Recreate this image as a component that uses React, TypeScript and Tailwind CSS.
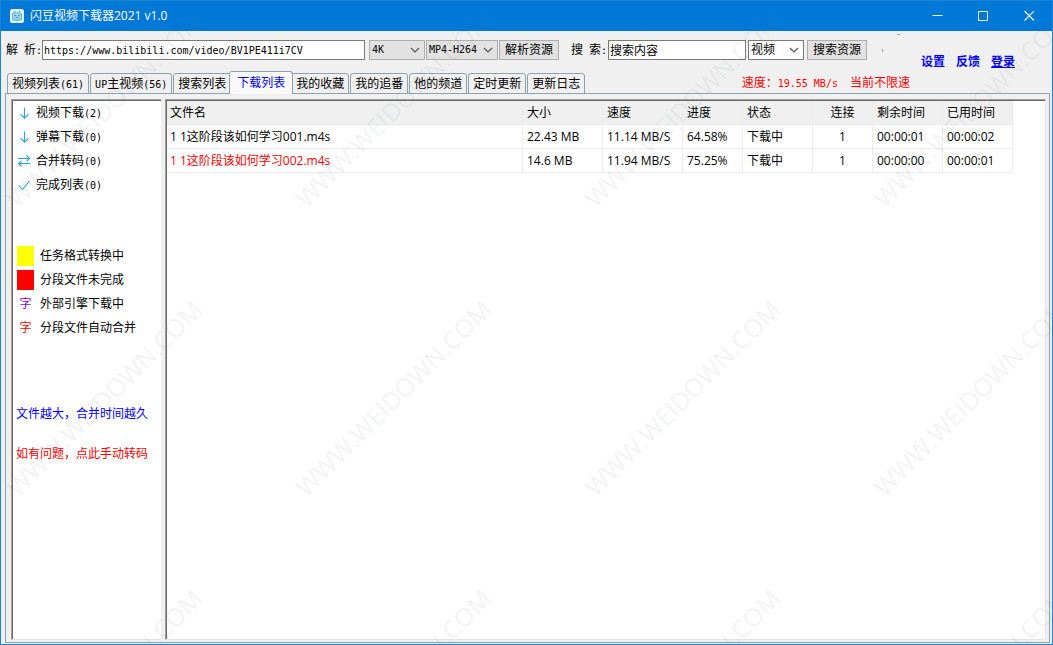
import { useState } from 'react'
import type { ReactNode } from 'react'

const uiFont = "font-['Open_Sans','Noto_Sans_CJK_SC',sans-serif]"
const monoFont = "font-['DejaVu_Sans_Mono','Noto_Sans_CJK_SC',monospace]"

const tabs = [
  { label: '视频列表', count: '(61)' },
  { prefix: 'UP', label: '主视频', count: '(56)' },
  { label: '搜索列表' },
  { label: '下载列表' },
  { label: '我的收藏' },
  { label: '我的追番' },
  { label: '他的频道' },
  { label: '定时更新' },
  { label: '更新日志' },
]

const queues = [
  { icon: 'down', label: '视频下载', count: 2 },
  { icon: 'down', label: '弹幕下载', count: 0 },
  { icon: 'swap', label: '合并转码', count: 0 },
  { icon: 'check', label: '完成列表', count: 0 },
]

const columns = [
  { title: '文件名', col: 'w-[356px]' },
  { title: '大小', col: 'w-20' },
  { title: '速度', col: 'w-20' },
  { title: '进度', col: 'w-[60px]' },
  { title: '状态', col: 'w-[70px]' },
  { title: '连接', col: 'w-[60px]', center: true },
  { title: '剩余时间', col: 'w-[70px]' },
  { title: '已用时间', col: 'w-[70px]' },
]

const rows = [
  { failed: false, cells: ['1 1这阶段该如何学习001.m4s', '22.43 MB', '11.14 MB/S', '64.58%', '下载中', '1', '00:00:01', '00:00:02'] },
  { failed: true, cells: ['1 1这阶段该如何学习002.m4s', '14.6 MB', '11.94 MB/S', '75.25%', '下载中', '1', '00:00:00', '00:00:01'] },
]

// Half-width characters, 6px each next to 12px Chinese
function Half({ children }: { children: ReactNode }) {
  return <span className={`whitespace-pre text-[10px] ${monoFont}`}>{children}</span>
}

function QueueIcon({ name }: { name: string }) {
  return (
    <svg className="h-3.5 w-3.5 shrink-0" viewBox="0 0 14 14" fill="none" stroke="#2b9fe0" strokeWidth="1.1">
      {name === 'down' && <path d="M7.5 1.5V12M3.5 8.2L7.5 12.2L11.5 8.2" />}
      {name === 'swap' && <path d="M1 4.5H12.5M9.5 1.5L12.5 4.5L9.5 7.3M13 9.5H1.5M4.5 6.8L1.5 9.5L4.5 12.5" />}
      {name === 'check' && <path d="M2 7.5L5.5 11.5L12.5 3" />}
    </svg>
  )
}

interface DropDownProps {
  label: string
  options: string[]
  className: string
}

function DropDown({ label, options, className }: DropDownProps) {
  return (
    <div className={`relative h-5 shrink-0 border ${className}`}>
      <select aria-label={label} className="block h-full w-full appearance-none bg-transparent pl-0.5 outline-none">
        {options.map((option) => (
          <option key={option}>{option}</option>
        ))}
      </select>
      <svg className="pointer-events-none absolute top-1.5 right-1 h-1.5 w-2.5" viewBox="0 0 10 6" fill="none" stroke="#555" strokeWidth="1.2">
        <path d="M1 1L5 5L9 1" />
      </svg>
    </div>
  )
}

function Watermark() {
  return (
    <svg aria-hidden="true" className="pointer-events-none absolute inset-0 z-20 h-full w-full overflow-hidden">
      {[208, 497, 786].map((y) =>
        [17, 306, 595, 884].map((x) => (
          <text
            key={`${x}-${y}`}
            transform={`translate(${x} ${y}) rotate(-45)`}
            className="fill-gray-500/9 font-['Open_Sans',sans-serif] text-[25px]"
          >
            WWW.WEIDOWN.COM
          </text>
        )),
      )}
    </svg>
  )
}

function TitleBar() {
  return (
    <header className="flex h-[30px] shrink-0 items-center bg-[#0078d7] pl-[9px] text-white">
      <svg className="h-3.5 w-3.5" viewBox="0 0 14 14">
        <rect width="14" height="14" rx="2.5" fill="#e9f6fb" />
        <path d="M4 2L6 4M10 2L8 4" stroke="#6bbbdc" strokeWidth="1.2" />
        <rect x="2.4" y="4" width="9.2" height="7.2" rx="1" fill="#9fd4ea" stroke="#6bbbdc" strokeWidth="1.2" />
        <path d="M4 7L6 6.3M10 7L8 6.3M5.5 9L7 8.3L8.5 9" stroke="#3f93bb" fill="none" />
      </svg>
      <h1 className="ml-1.5 flex-1 text-xs">闪豆视频下载器2021 v1.0</h1>
      <button type="button" aria-label="最小化" className="flex h-full w-[46px] items-center justify-center">
        <svg className="h-[11px] w-[11px]" viewBox="0 0 11 11" stroke="currentColor">
          <path d="M0.5 4.5H10.5" />
        </svg>
      </button>
      <button type="button" aria-label="最大化" className="flex h-full w-[46px] items-center justify-center">
        <svg className="h-[11px] w-[11px]" viewBox="0 0 11 11" fill="none" stroke="currentColor">
          <path d="M0.5 0.5H9.5V9.5H0.5Z" />
        </svg>
      </button>
      <button type="button" aria-label="关闭" className="flex h-full w-[46px] items-center justify-center">
        <svg className="h-[11px] w-[11px]" viewBox="0 0 11 11" stroke="currentColor" strokeWidth="1.1">
          <path d="M0.5 0L10 9.5M10 0L0.5 9.5" />
        </svg>
      </button>
    </header>
  )
}

function Toolbar() {
  return (
    <div className="flex h-10 shrink-0 items-start pt-[9px] pr-[37px] pl-[5px]">
      <label htmlFor="url" className="w-9 shrink-0 leading-5 whitespace-nowrap">
        解<Half> </Half>析<Half>:</Half>
      </label>
      <input
        id="url"
        defaultValue="https://www.bilibili.com/video/BV1PE411i7CV"
        className={`h-5 min-w-0 flex-1 border border-[#7a7a7a] bg-white px-px text-[10px] outline-none ${monoFont}`}
      />
      <DropDown label="清晰度" options={['4K']} className={`ml-1 w-14 border-[#adadad] bg-[#e1e1e1] text-[10px] ${monoFont}`} />
      <DropDown label="编码" options={['MP4-H264']} className={`ml-px w-[72px] border-[#adadad] bg-[#e1e1e1] text-[10px] ${monoFont}`} />
      <button type="button" className="ml-px h-5 w-[60px] shrink-0 border border-[#adadad] bg-[#e1e1e1]">
        解析资源
      </button>
      <label htmlFor="keyword" className="ml-3 w-[37px] shrink-0 leading-5 whitespace-nowrap">
        搜<Half> </Half>索<Half>:</Half>
      </label>
      <input
        id="keyword"
        defaultValue="搜索内容"
        className="h-5 w-[138px] shrink-0 border border-[#7a7a7a] bg-white px-px outline-none"
      />
      <DropDown label="搜索类型" options={['视频']} className="ml-0.5 w-14 border-[#7a7a7a] bg-white" />
      <button type="button" className="ml-[3px] h-5 w-[60px] shrink-0 border border-[#adadad] bg-[#e1e1e1]">
        搜索资源
      </button>
      <span className="mt-[9px] ml-[15px] h-[3px] w-px shrink-0 bg-gray-400" />
      <span className="-mt-1.5 ml-3.5 h-px w-[3px] shrink-0 bg-gray-400" />
      <nav className="mt-3 ml-[21px] flex shrink-0 gap-[11px] leading-5 font-bold text-[#0000ff]">
        <a href="#settings">设置</a>
        <a href="#feedback">反馈</a>
        <a href="#login" className="underline">登录</a>
      </nav>
    </div>
  )
}

export default function App() {
  const [active, setActive] = useState(3)

  return (
    <div className={`relative flex h-screen min-w-0 flex-col overflow-hidden border border-[#1883d7] bg-[#f0f0f0] text-xs text-black ${uiFont}`}>
      <TitleBar />
      <Toolbar />

      <div className="relative z-10 flex h-[23px] shrink-0 items-end pl-1.5">
        <div role="tablist" className="flex items-end gap-px">
          {tabs.map((tab, i) => (
            <button
              key={tab.label}
              type="button"
              role="tab"
              aria-selected={i === active}
              onClick={() => setActive(i)}
              className={
                i === active
                  ? 'relative z-10 -mx-[3px] h-[23px] rounded-t-[3px] border border-b-0 border-[#8ba3b0] bg-[#f9f9f9] px-[7px] whitespace-nowrap text-[#0000ff]'
                  : 'h-[21px] rounded-t-[3px] border border-[#8ba3b0] px-1 whitespace-nowrap'
              }
            >
              {tab.prefix && <Half>{tab.prefix}</Half>}
              {tab.label}
              {tab.count && <Half>{tab.count}</Half>}
            </button>
          ))}
        </div>
        <p className="mr-[142px] ml-auto self-start leading-6 whitespace-nowrap text-[#ff0000]">
          速度：<Half>19.55 MB/s{'  '}</Half>当前不限速
        </p>
      </div>

      <main className="mr-0.5 mb-px ml-1 -mt-px flex min-h-0 flex-1 border border-[#8ba3b0] pt-[5px] pr-[3px] pb-0.5 pl-[5px]">
        <aside className="w-[150px] shrink-0 border-t border-b border-l border-t-[#a0a0a0] border-b-[#e3e3e3] border-l-[#a0a0a0]">
          <div className="h-full border-t border-l border-[#696969] bg-white">
            <ul>
              {queues.map((queue) => (
                <li key={queue.label} className="flex h-6 items-center gap-[5px] pl-1">
                  <QueueIcon name={queue.icon} />
                  <span>
                    {queue.label}
                    <Half>({queue.count})</Half>
                  </span>
                </li>
              ))}
            </ul>

            <ul className="mt-[47px]">
              <li className="flex h-6 items-center pl-1">
                <span className="mr-1.5 h-5 w-[17px] bg-[#ffff00]" />
                任务格式转换中
              </li>
              <li className="flex h-6 items-center pl-1">
                <span className="mr-1.5 h-5 w-[17px] bg-[#ff0000]" />
                分段文件未完成
              </li>
              <li className="flex h-6 items-center pl-1">
                <span className="mr-1.5 w-[17px] text-center text-[#8000ff]">字</span>
                外部引擎下载中
              </li>
              <li className="flex h-6 items-center pl-1">
                <span className="mr-1.5 w-[17px] text-center text-[#ff0000]">字</span>
                分段文件自动合并
              </li>
            </ul>

            <p className="mt-[62px] pl-[3px] leading-6 whitespace-nowrap text-[#0000ff]">文件越大，合并时间越久</p>
            <button type="button" className="mt-4 block pl-[3px] leading-6 whitespace-nowrap text-[#ff0000]">
              如有问题，点此手动转码
            </button>
          </div>
        </aside>

        <section className="ml-1 min-w-0 flex-1 border border-t-[#a0a0a0] border-r-[#e3e3e3] border-b-[#e3e3e3] border-l-[#a0a0a0]">
          <div className="h-full overflow-hidden border-t border-l border-[#696969] bg-white">
            <table className="w-[846px] table-fixed border-separate border-spacing-0">
              <colgroup>
                {columns.map((column) => (
                  <col key={column.title} className={column.col} />
                ))}
              </colgroup>
              <thead>
                <tr className="h-6 bg-[#f0f0f0]">
                  {columns.map((column) => (
                    <th
                      key={column.title}
                      className={`border-r border-b border-[#ececec] p-0 font-normal ${column.center ? 'text-center' : 'pl-1 text-left first:pl-[3px]'}`}
                    >
                      {column.title}
                    </th>
                  ))}
                </tr>
              </thead>
              <tbody>
                {rows.map((row) => (
                  <tr key={row.cells[0]} className="h-6">
                    {row.cells.map((cell, i) => (
                      <td
                        key={columns[i].title}
                        className={`border-r border-b border-[#ececec] p-0 whitespace-nowrap ${columns[i].center ? 'text-center' : 'pl-1 first:pl-[3px]'} ${row.failed && i === 0 ? 'text-[#ff0000]' : ''}`}
                      >
                        {cell}
                      </td>
                    ))}
                  </tr>
                ))}
              </tbody>
            </table>
          </div>
        </section>
      </main>

      <Watermark />
    </div>
  )
}
